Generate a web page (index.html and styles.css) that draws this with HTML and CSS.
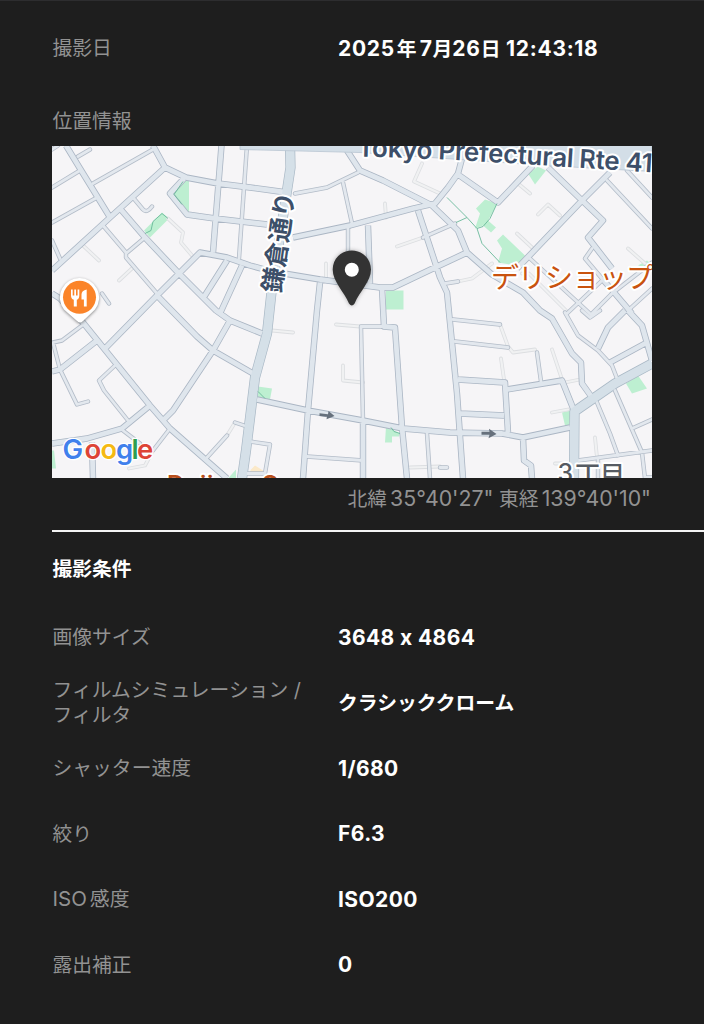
FILE: index.html
```html
<!DOCTYPE html>
<html lang="ja">
<head>
    <meta charset="UTF-8">
    <meta name="viewport" content="width=device-width, initial-scale=1.0">
    <title>撮影情報</title>
    <link rel="stylesheet" href="styles.css">
</head>
<body>
    <main class="panel">
        <dl class="row row-date">
            <dt class="label">撮影日</dt>
            <dd class="value value-date">2025<span class="kanji-wide">年</span>7<span class="kanji">月</span>26<span class="kanji">日</span> 12:43:18</dd>
        </dl>

        <section class="location">
            <h2 class="label location-title">位置情報</h2>
            <svg class="map" viewBox="52 145.5 600 332.5" preserveAspectRatio="none">
                <defs>
                    <path id="lanes" d="M78 156L90 149M93 183L153 149M52 187L80 170M52 222L97 197M52 149L58 145M133 197L143 209Q147 213 152 206M103 225L126 252V257L157 293M126 253L145 237M52 240L60 258M247 145L239 258M102 293L109 303
                        M60 369L77 404L88 401M60 369L53 342L62 340L82 325M115 365L99 380L104 390L128 420M170 428L153 450M123 430L140 443M207 457L227 435M235 422L244 425
                        M295 193L327 187L358 172M343 182L352 223M348 228V260M423 237L455 223M445 283L458 281
                        M607 180L652 228M627 170L652 197M530 258L578 302L592 315M567 313L602 280M592 313L612 293L652 262M628 310L652 288M592 248L585 258L602 278
                        M361 326L363 420M361 326H384M307 456L363 460M250 441L270 444L265 473H245M427 433L430 478
                        M453 319L500 324M455 341L508 347M537 352L541 381M597 402L610 433L618 455M615 390L642 452L645 478M632 428L652 419M578 460L652 450M598 460V478M645 477H652
                        M565 312L578 335L598 350L612 365L617 378M582 310L590 317L600 310M440 467H447"/>
                    <path id="streets" d="M66 145L80 168L109.500 216M52 270L110 217L165 167M153 145L165 167L186 177L218 183L250 187L287 192M184 178L170 193L187 214L215 218L267 224M221.500 145L213 252M120 208L145 237L178 272L216 310L230 320L262 333
                        M157 295L200 252L227 257L250 265L272 271L320 279L380 287H393L435 267L467 252M157 295L106 347M157 295L197 336L213 350L253 373M227 260L203 298M242 265L220 313
                        M52 293L60 298L83 322L150 405L170 428L227 478M52 371L60 369L97 340M230 320L213 350L173 410L163 420M52 443L87 438L122 428L150 405M92 442L93 478
                        M347 150L360 170L383 180L432 205L458 230L467 252L492 274L523 292L540 310L552 318L572 353L581 362L582 383L592 397M293 237L350 225L413 208L435 203L448 187L458 173L462 158M458 174L498 202L533 165
                        M368 225L370 283M320 282L317 310L308 410L303 478M382 288L384 326L395 327L402 427L407 478M418 210L440 277L447 292L457 393L463 478
                        M548 167L580 198L603 220L588 237L612 268M602 278L615 293L632 313M610 172L582 200L517 268
                        M257 399L308 410L363 420L403 428L450 432L502 433L523 437L570 427M363 420V478M458 379L505 382L508 432M507 389L562 380L574 410M460 413L504 415M523 437L524 460L531 465L532 478
                        M598 348L608 327L625 310M610 362L645 343M628 310L642 325L652 360"/>
                    <path id="avenues" d="M290 145L290.500 167L287 190L272 287L267 333L255 377L246 450L242 478M652 363L615 383L574.500 411L574 478"/>
                    <path id="alleys" d="M83 245L99 260M133 267L119 280M168 218L183 232L181 242L192 255M153 450L145 465L129 468M385 203L386 217M326 263V278M397 246L423 237M422 163L414 181L440 193M458 281L472 278L492 263M522 273H529L567 311M518 183L530 193M560 215L548 204L538 214M517 233L532 247M628 248L645 263M227 435L235 422M272 330L293 332M336 324L360 326M343 365V380L363 382M410 467L440 466M500 324L508 346L513 352L535 349M501 358L504 379M552 349L562 379M565 382L580 379M552 412L568 409M595 437L597 457M555 463H563"/>
                    <path id="route-label" d="M357.500 156Q445 158 560 166L700 175"/>
                </defs>

                <rect class="land" x="52" y="145" width="600" height="334"/>

                <g class="park">
                    <path d="M182 180L189 179V212L173 193Z"/>
                    <path d="M162 212L169 218L150 237L144 230Z"/>
                    <path d="M386 290H403.500V309H385Z"/>
                    <path d="M528 173L538 166L546 170L535 184Z"/>
                    <path d="M485 199L497 203L488 220L496 227L491 232L483 225L475 228L480 213L476 208Z"/>
                    <path d="M503 234L525 255L517 265L498 262L502 248L497 240Z"/>
                    <path d="M638 265L647 260L652 264V268Z"/>
                    <path d="M258 386L272 388L270 399L257 397Z"/>
                    <path d="M386 426L400 433L399 436H392V442H385Z"/>
                    <path d="M626 383L638 375L647 388L632 393Z"/>
                    <path d="M562 412L571 410L569 426L565 425Z"/>
                    <path d="M52 450H54L56 468H52ZM228 478L236 469V478Z"/>
                </g>
                <path class="sand" d="M251 469L255 465L263 470V473H249Z"/>

                <use class="alley-edge" href="#alleys"/>
                <use class="alley-fill" href="#alleys"/>
                <use class="lane-edge" href="#lanes"/>
                <use class="street-edge" href="#streets"/>
                <use class="avenue-edge" href="#avenues"/>
                <use class="lane-fill" href="#lanes"/>
                <use class="street-fill" href="#streets"/>
                <use class="avenue-fill" href="#avenues"/>
                <path class="highway" d="M240 145H652V171L545 165L445 158L360 152L240 149Z"/>

                <path class="footpath" d="M447 197L467 217L477 228L482 243L500 262M467 217L456 222M497 203L490 218L483 226L477 228M183 181L174 194L182 204M162 213L153 221L151 230L145 233M162 213L168 218M258 391L265 398M391 427L394 431L400 433"/>

                <g class="oneway">
                    <path d="M319.500 412.800L328 413.800L328.500 410.500L334.500 415.500L326.500 418.800L327 416.200L319.500 415.400Z"/>
                    <path d="M481.500 431.300H489.500L489 428.200L496.500 433.500L488.500 437.800L489.500 434.200H481.500Z"/>
                </g>

                <text class="map-text route"><textPath href="#route-label" textLength="295">Tokyo Prefectural Rte 41</textPath></text>
                <text class="map-text avenue-name" transform="translate(280.500 293) rotate(-82)" textLength="101">鎌倉通り</text>
                <text class="map-text shop" x="491" y="287.500" textLength="163">デリショップ</text>
                <text class="map-text shop-small" x="167 184 200 207" y="492">Daij</text>
                <text class="map-text shop-small" x="261" y="492">C</text>
                <text class="map-text district"><tspan x="557.500" y="481">3</tspan><tspan x="575" y="483">丁目</tspan></text>

                <!-- restaurant marker -->
                <g class="food-marker">
                    <path class="food-ring" d="M79.500 277.500A19.500 19.500 0 0 1 95 309L83 320.500Q80 323.500 77 320.500L64 309A19.500 19.500 0 0 1 79.500 277.500Z"/>
                    <circle class="food-disc" cx="79.500" cy="296.800" r="16.500"/>
                    <path class="food-icon" d="M71 289H72.700V295H74.300V289H76V295H77.600V289H79.300V295Q79.300 298.500 76.800 299.300V306H73.800V299.300Q71 298.500 71 295ZM86.700 289V306H83.900V299H81.500V294Q81.500 290 86.700 289Z"/>
                </g>

                <!-- photo location -->
                <path class="pin" d="M351.800 250C341 250 332.700 258.500 332.700 269C332.700 281 344 291 349 303Q351.800 307 354.600 303C359.500 291 371 281 371 269C371 258.500 362.500 250 351.800 250Z"/>
                <circle class="pin-hole" cx="351.800" cy="269.300" r="7"/>

                <text class="map-text brand" y="458.500"><tspan class="g-blue" x="62.500">G</tspan><tspan class="g-red" x="84.500">o</tspan><tspan class="g-yellow" x="100.500">o</tspan><tspan class="g-blue" x="116">g</tspan><tspan class="g-green" x="131.500">l</tspan><tspan class="g-red" x="137">e</tspan></text>
            </svg>
            <p class="coords"><span class="kanji">北緯</span><span class="deg">35°40'27"</span> <span class="kanji">東経</span><span class="deg">139°40'10"</span></p>
        </section>

        <section class="conditions">
            <h2 class="conditions-title">撮影条件</h2>
            <dl class="row">
                <dt class="label">画像サイズ</dt>
                <dd class="value value-size">3648 x 4864</dd>
            </dl>
            <dl class="row">
                <dt class="label">フィルムシミュレーション /<br>フィルタ</dt>
                <dd class="value value-ja">クラシッククローム</dd>
            </dl>
            <dl class="row">
                <dt class="label">シャッター速度</dt>
                <dd class="value">1/680</dd>
            </dl>
            <dl class="row">
                <dt class="label">絞り</dt>
                <dd class="value">F6.3</dd>
            </dl>
            <dl class="row">
                <dt class="label"><span class="iso">ISO</span>感度</dt>
                <dd class="value">ISO200</dd>
            </dl>
            <dl class="row">
                <dt class="label">露出補正</dt>
                <dd class="value">0</dd>
            </dl>
        </section>
    </main>
</body>
</html>
```
FILE: styles.css
```css
:root {
    --bg-color: #1e1e1e;
    --edge-color: #2d2d2f;
    --label-color: #929292;
    --value-color: #ffffff;
    --road-color: #dfe6ed;
    --road-edge: #abb6c4;
}

* {
    box-sizing: border-box;
}

body {
    margin: 0;
    background-color: var(--bg-color);
    font-family: Inter, "Noto Sans CJK JP", sans-serif;
    font-size: 19.8px;
    line-height: 25px;
    color: var(--value-color);
}

h2, p, dl, dd {
    margin: 0;
}

.panel {
    height: 1024px;
    padding: 14px 0 0 52px;
    border-top: 1px solid var(--edge-color);
    overflow: hidden;
}

.row {
    display: grid;
    grid-template-columns: 286px 1fr;
    align-items: center;
    height: 65.5px;
}

.label {
    padding: 2px 0 0 0.5px;
    font-size: 19.8px;
    font-weight: 400;
    color: var(--label-color);
}

.value {
    padding-top: 1px;
    font-size: 21px;
    font-weight: 700;
    letter-spacing: 0.4px;
}

.value-date {
    padding-top: 2px;
    letter-spacing: 0.7px;
}

.value-ja,
.kanji,
.kanji-wide {
    font-size: 19.8px;
    letter-spacing: 0;
}

.kanji-wide {
    padding: 0 3px 0 2px;
}

.value-ja {
    padding-top: 2px;
}

.location {
    height: 449.5px;
    padding-top: 26px;
}

.location-title {
    height: 39px;
}

.map {
    display: block;
    width: 600px;
    height: 332.5px;
}

.coords {
    width: 599px;
    padding-top: 8px;
    text-align: right;
    color: var(--label-color);
}

.deg {
    font-size: 21.3px;
    padding-left: 3px;
}

.conditions {
    border-top: 2px solid #f4f4f4;
    padding-top: 25px;
}

.conditions-title {
    height: 47px;
    padding-left: 0.5px;
    font-size: 19.8px;
    font-weight: 700;
}

.iso {
    font-size: 20.5px;
    line-height: 20px;
    padding-right: 3px;
}

/* Map */
.land { fill: #f6f5f7; }
.park { fill: #bdefd1; }
.sand { fill: #fbe9c9; }
.highway { fill: #d3dee7; stroke: #b9c5d2; stroke-width: 0.8; }

.map use {
    fill: none;
    stroke-linejoin: round;
}

.alley-edge { stroke: #dcdee1; stroke-width: 3.8; stroke-linecap: round; }
.alley-fill { stroke: #f0f1f2; stroke-width: 2.2; stroke-linecap: round; }
.lane-edge { stroke: #b3bcc8; stroke-width: 4.4; stroke-linecap: round; }
.lane-fill { stroke: #e3e8ee; stroke-width: 2.8; stroke-linecap: round; }
.street-edge { stroke: var(--road-edge); stroke-width: 6.4; }
.street-fill { stroke: var(--road-color); stroke-width: 4.8; }
.avenue-edge { stroke: #a9b8c5; stroke-width: 10.2; }
.avenue-fill { stroke: #d5e0e8; stroke-width: 8.8; }

.footpath {
    fill: none;
    stroke: #69b99a;
    stroke-width: 0.9;
}

.oneway { fill: #66707c; }

.map-text {
    stroke: #ffffff;
    stroke-width: 4px;
    stroke-linejoin: round;
    paint-order: stroke;
}

.route {
    font-size: 26px;
    font-weight: 600;
    fill: #3d4f69;
}

.avenue-name {
    font-size: 25px;
    font-weight: 700;
    fill: #3d4f69;
}

.shop {
    font-size: 28px;
    fill: #c9530f;
}

.shop-small {
    font-size: 24px;
    font-weight: 600;
    fill: #b9501c;
}

.district {
    font-size: 25px;
    font-weight: 500;
    fill: #565b62;
}

.food-ring {
    fill: #ffffff;
    filter: drop-shadow(0 1px 1.5px rgba(0, 0, 0, 0.45));
}

.food-disc { fill: #fb8429; }
.food-icon { fill: #ffffff; }

.pin {
    fill: #333333;
    filter: drop-shadow(0 0 2px rgba(0, 0, 0, 0.3));
}

.pin-hole { fill: #ffffff; }

.brand {
    font-family: Inter, sans-serif;
    font-size: 27.5px;
    font-weight: 600;
    stroke-width: 2.5px;
}

.g-blue { fill: #4080ec; }
.g-red { fill: #dd4436; }
.g-yellow { fill: #f5b912; }
.g-green { fill: #2f9e4f; }
```
